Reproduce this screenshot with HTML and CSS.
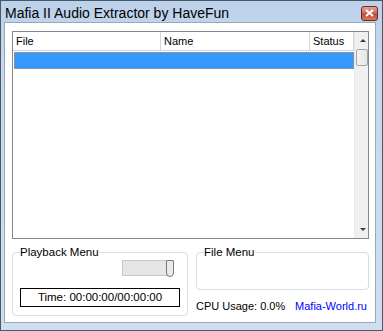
FILE: index.html
```html
<!DOCTYPE html>
<html lang="en">
<head>
    <meta charset="UTF-8">
    <title>Mafia II Audio Extractor by HaveFun</title>
    <link rel="stylesheet" href="styles.css">
</head>
<body>
    <div class="window">
        <div class="titlebar">
            <span class="title">Mafia II Audio Extractor by HaveFun</span>
            <button class="close">
                <svg width="9" height="8" viewBox="0 0 9 8"><path d="M1 1 L8 7 M8 1 L1 7" stroke="#fff" stroke-width="2"/></svg>
            </button>
        </div>

        <div class="client">
            <div class="listview">
                <div class="list-main">
                    <div class="header">
                        <div class="col col-file">File</div>
                        <div class="col col-name">Name</div>
                        <div class="col col-status">Status</div>
                    </div>
                    <div class="rows">
                        <div class="row selected"></div>
                    </div>
                </div>
                <div class="scrollbar">
                    <div class="arrow up"></div>
                    <div class="thumb"></div>
                    <div class="track"></div>
                    <div class="arrow down"></div>
                </div>
            </div>

            <div class="bottom">
                <fieldset class="group playback">
                    <legend>Playback Menu</legend>
                    <div class="slider-row">
                        <div class="slider">
                            <div class="knob"></div>
                        </div>
                    </div>
                    <div class="time">Time: 00:00:00/00:00:00</div>
                </fieldset>

                <div class="right-side">
                    <fieldset class="group filemenu">
                        <legend>File Menu</legend>
                    </fieldset>
                    <div class="status-line">
                        <span>CPU Usage: 0.0%</span>
                        <span class="link">Mafia-World.ru</span>
                    </div>
                </div>
            </div>
        </div>
    </div>
</body>
</html>
```

FILE: styles.css
```css
* {
    margin: 0;
    padding: 0;
    box-sizing: border-box;
}

body {
    width: 383px;
    height: 331px;
    font-family: "Liberation Sans", Arial, sans-serif;
    font-size: 11px;
    color: #000;
    overflow: hidden;
}

.window {
    width: 383px;
    height: 331px;
    border: 1px solid #4a5866;
    background: linear-gradient(#bcd1ea 0px, #c6d8ed 60px, #cfdff0 100%);
    display: flex;
    flex-direction: column;
    padding: 0 6px 7px 3px;
}

.titlebar {
    height: 21px;
    display: flex;
    align-items: center;
    justify-content: space-between;
    padding-left: 1px;
}

.title {
    font-size: 14px;
    color: #000;
    margin-top: 3px;
    white-space: nowrap;
}

.close {
    width: 17px;
    height: 15px;
    margin-right: -2px;
    margin-top: 3px;
    border: 1px solid #6b2a23;
    border-radius: 3px;
    background: linear-gradient(#e0a393 0%, #cf6d58 45%, #c04a33 55%, #d27a63 100%);
    display: flex;
    align-items: center;
    justify-content: center;
}

.client {
    flex: 1;
    background: #fff;
    border: 1px solid #9aa9b8;
    padding: 8px 6px 0 7px;
    display: flex;
    flex-direction: column;
}

.listview {
    height: 208px;
    border: 1px solid #828790;
    display: flex;
}

.list-main {
    flex: 1;
    display: flex;
    flex-direction: column;
}

.header {
    height: 19px;
    display: flex;
    border-bottom: 1px solid #d5d5d5;
}

.col {
    padding-left: 3px;
    line-height: 18px;
    border-right: 1px solid #d5d5d5;
}

.col-file {
    width: 148px;
}

.col-name {
    width: 149px;
}

.col-status {
    width: 44px;
}

.rows {
    flex: 1;
    padding: 1px 0 0 1px;
}

.row {
    height: 17px;
}

.selected {
    background: #3399ff;
    border: 1px dotted #e08a3a;
}

.scrollbar {
    width: 17px;
    background: #f0f0f0;
    border-left: 1px solid #e8e8e8;
    display: flex;
    flex-direction: column;
}

.arrow {
    height: 17px;
    position: relative;
}

.arrow::after {
    content: "";
    position: absolute;
    left: 5px;
    border-left: 3px solid transparent;
    border-right: 3px solid transparent;
}

.up::after {
    top: 7px;
    border-bottom: 3px solid #3c3c3c;
}

.down::after {
    top: 7px;
    border-top: 3px solid #3c3c3c;
}

.thumb {
    height: 17px;
    margin: 0 0 0 1px;
    border: 1px solid #a4a4a4;
    border-radius: 2px;
    background: linear-gradient(90deg, #f3f3f3, #e6e6e6);
}

.track {
    flex: 1;
}

.bottom {
    flex: 1;
    display: flex;
    gap: 8px;
    padding-top: 7px;
}

.group {
    border: 1px solid #d5dfe5;
    border-radius: 4px;
    padding: 0 7px;
}

.group legend {
    padding: 0;
    margin-left: 0;
    line-height: 13px;
    font-size: 11.5px;
}

.playback {
    width: 176px;
    height: 70px;
    display: flex;
    flex-direction: column;
}

.slider-row {
    display: flex;
    justify-content: flex-end;
    padding: 1px 7px 0 0;
}

.slider {
    width: 51px;
    height: 16px;
    background: #e6e6e6;
    border: 1px solid #c8c8c8;
    border-right: none;
    position: relative;
}

.knob {
    position: absolute;
    right: -1px;
    top: -1px;
    width: 8px;
    height: 17px;
    background: #eaeaea;
    border: 1px solid #7a7a7a;
    border-radius: 1px 1px 4px 4px;
}

.time {
    margin-top: 12px;
    height: 19px;
    border: 1px solid #000;
    text-align: center;
    line-height: 17px;
    white-space: nowrap;
    font-size: 11.5px;
}

.right-side {
    flex: 1;
    display: flex;
    flex-direction: column;
}

.filemenu {
    height: 44px;
}

.status-line {
    display: flex;
    justify-content: space-between;
    padding: 10px 2px 0 0;
    white-space: nowrap;
}

.link {
    color: #0000ff;
}
```
